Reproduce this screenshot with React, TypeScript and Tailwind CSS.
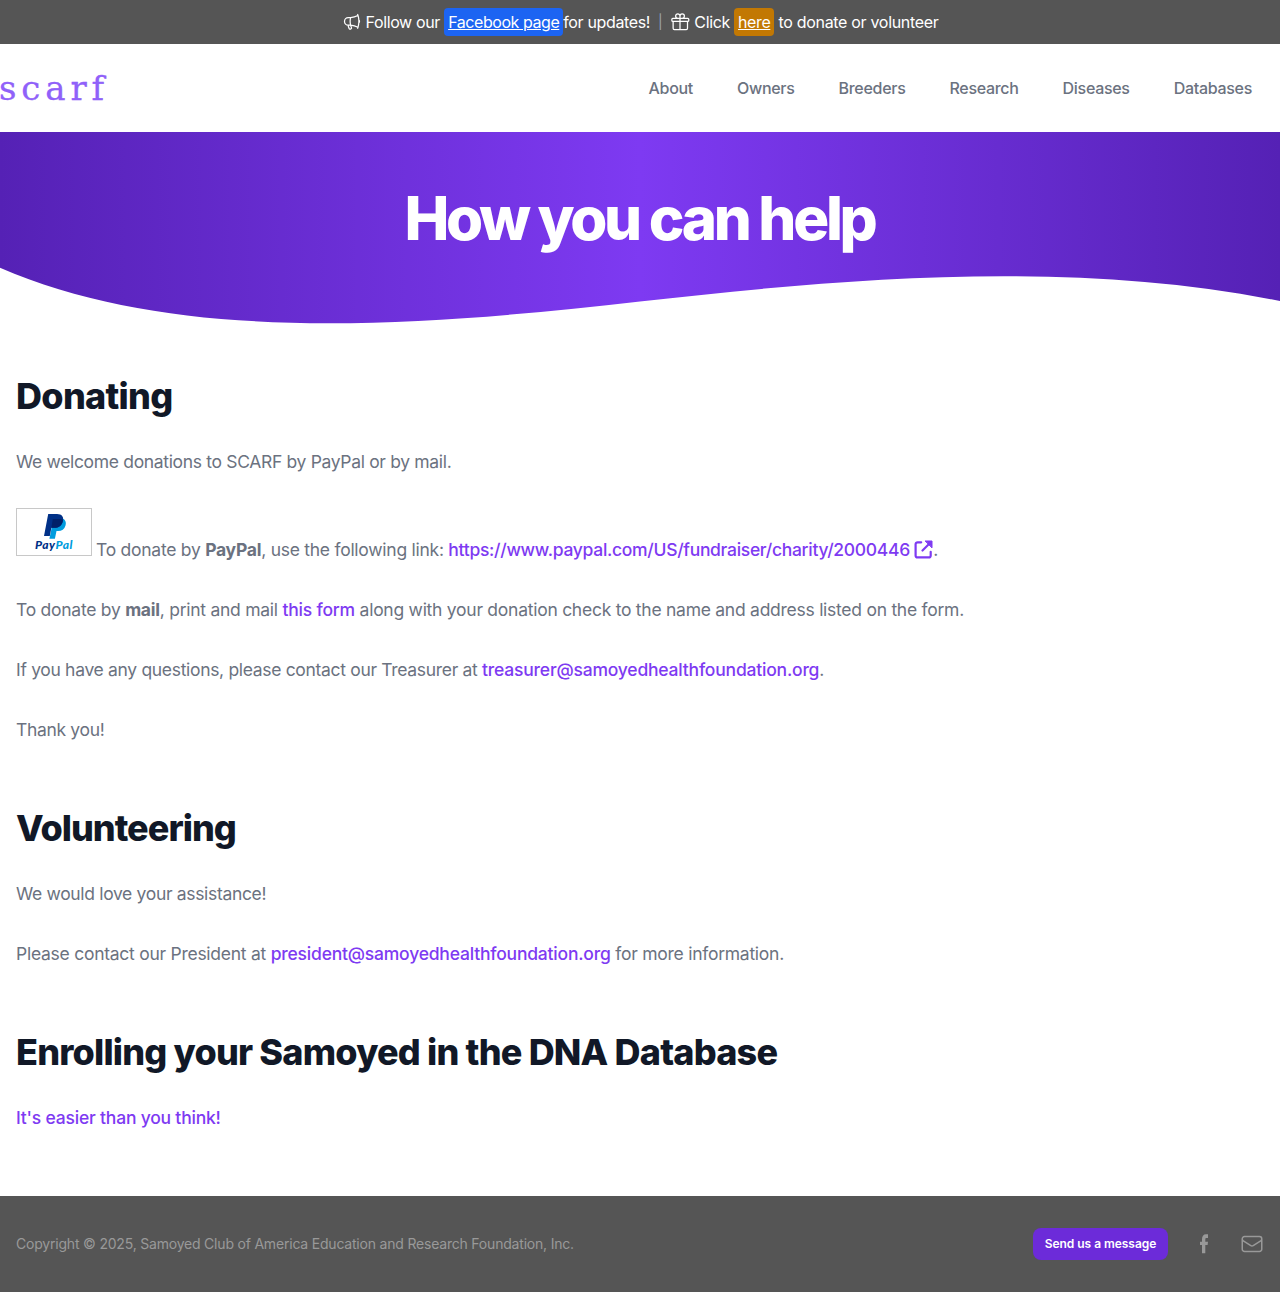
import React from "react";
import { HiOutlineMegaphone, HiOutlineGift, HiOutlineEnvelope } from "react-icons/hi2";

const navItems = ["About", "Owners", "Breeders", "Research", "Diseases", "Databases"];

function Banner() {
  return (
    <div className="flex h-11 items-center justify-center bg-[#555555] pl-px text-base tracking-[-0.36px] whitespace-pre text-white">
      <HiOutlineMegaphone className="mr-[3px] size-5" />
      <span>Follow our </span>
      <a className="flex h-7 items-center rounded bg-[#1c64f2] px-1 tracking-[-0.44px] underline">Facebook page</a>
      <span>for updates!</span>
      <span className="mx-2 text-sm text-[#9ca3af]">|</span>
      <HiOutlineGift className="mr-1 size-5" />
      <span>Click </span>
      <a className="flex h-7 items-center rounded bg-[#c27803] px-1 tracking-[-0.4px] underline">here</a>
      <span className="tracking-[-0.31px]"> to donate or volunteer</span>
    </div>
  );
}

function Header() {
  return (
    <header className="flex h-[88px] items-center justify-between bg-white pr-7">
      <span className="-ml-px font-['DejaVu_Serif'] text-[34px] leading-none tracking-[4.9px] text-[#9061f9] [-webkit-text-stroke:0.3px_#9061f9]">scarf</span>
      <nav className="flex gap-11 text-base font-medium tracking-[-0.3px] text-[#6b7280]">
        {navItems.map((item) => (
          <a key={item}>{item}</a>
        ))}
      </nav>
    </header>
  );
}

function Hero() {
  return (
    <section className="relative h-[200px] bg-linear-to-r/srgb from-[#5521b5] via-[#7e3af2] to-[#5521b5] pt-14">
      <h1 className="pr-px text-center text-[60px] leading-[60px] font-extrabold tracking-[-3.3px] text-white">How you can help</h1>
      <svg className="absolute bottom-0 left-0 w-full" height="72" viewBox="0 260 1280 72" preserveAspectRatio="none">
        <path fill="#fff" d="M0 267.7C172 342.2 400 329 640 301.500C840 279 1067 258.500 1280 301V333H0Z" />
      </svg>
    </section>
  );
}

function PayPalBadge() {
  return (
    <span className="mr-1 inline-block h-12 w-[76px] overflow-hidden border border-[#c8c8c8] bg-white pt-[5px] text-center">
      <svg className="ml-[27px] block" width="22" height="25" viewBox="0 0 22 25">
        <path fill="#009cde" d="M9.5 5H19.500c2.400 1.500 2.700 4 2 6.500-1 3.700-3.800 5.500-7.300 5.500h-1.700L10.900 24.700H5.400Z" />
        <path fill="#003087" d="M4.200 0H13c4.800 0 6.900 2.800 6 6.900-1 4.700-4.200 6.900-8.800 6.900H7.400L5.800 22H0Z" />
        <path fill="#012169" d="M8.800 5h7c1.200 0 2.200.3 3.100.9-.8 5.500-4 7.900-8.700 7.900H7.400Z" />
      </svg>
      <span className="block font-['Lato'] text-[12px] leading-[12px] font-black tracking-[0.5px] text-[#003087] italic">
        Pay<span className="text-[#009cde]">Pal</span>
      </span>
    </span>
  );
}

function ExternalIcon() {
  return (
    <svg className="inline-block align-[-3px]" width="19" height="19" viewBox="0 0 19 19" fill="none" stroke="currentColor" strokeWidth="2.2" strokeLinecap="round" strokeLinejoin="round">
      <path d="M7.200 2.300H3.600a2 2 0 0 0-2 2V15.400a2 2 0 0 0 2 2H14.700a2 2 0 0 0 2-2V11.800" />
      <path d="M8.500 10.500L15.500 3.500" />
      <path fill="currentColor" strokeWidth="1" d="M11.500 1H18V7.500Z" />
    </svg>
  );
}

function Link({ children }: { children: React.ReactNode }) {
  return <a className="font-medium tracking-[-0.2px] text-[#7e3af2]">{children}</a>;
}

function Main() {
  return (
    <main className="flex h-[864px] flex-col px-4 pt-11 text-[17.5px] leading-8 tracking-[-0.26px] text-[#6b7280]">
      <h2 className="text-[36px] leading-10 font-extrabold tracking-[-0.7px] text-[#111827]">Donating</h2>
      <p className="mt-[30px] tracking-[-0.33px]">We welcome donations to SCARF by PayPal or by mail.</p>
      <p className="mt-[30px] h-[58px]">
        <PayPalBadge />
        To donate by <strong>PayPal</strong>, use the following link:{" "}
        <a className="font-medium tracking-[-0.3px] text-[#7e3af2]">
          https://www.paypal.com/US/fundraiser/charity/2000446 <ExternalIcon />
        </a>
        .
      </p>
      <p className="mt-7">
        To donate by <strong>mail</strong>, print and mail <Link>this form</Link> along with your donation check to the name and address listed on the form.
      </p>
      <p className="mt-7 tracking-[-0.32px]">
        If you have any questions, please contact our Treasurer at <Link>treasurer@samoyedhealthfoundation.org</Link>.
      </p>
      <p className="mt-7 tracking-[-0.33px]">Thank you!</p>
      <h2 className="mt-[62px] text-[36px] leading-10 font-extrabold tracking-[-0.98px] text-[#111827]">Volunteering</h2>
      <p className="mt-[30px] tracking-[-0.33px]">We would love your assistance!</p>
      <p className="mt-7">
        Please contact our President at <Link>president@samoyedhealthfoundation.org</Link> for more information.
      </p>
      <h2 className="mt-[62px] text-[36px] leading-10 font-extrabold tracking-[-0.8px] text-[#111827]">
        Enrolling your Samoyed in the DNA Database
      </h2>
      <p className="mt-[30px]">
        <Link>It's easier than you think!</Link>
      </p>
    </main>
  );
}

function Footer() {
  return (
    <footer className="flex h-24 items-center justify-between bg-[#555555] px-4 text-[#999999]">
      <p className="text-sm tracking-[-0.2px]">
        Copyright © 2025, Samoyed Club of America Education and Research Foundation, Inc.
      </p>
      <div className="flex items-center">
        <a className="flex h-8 w-[135px] items-center justify-center rounded-lg bg-[#6c2bd9] text-xs font-semibold tracking-[-0.04px] text-white">Send us a message</a>
        <svg className="ml-6 size-6" viewBox="0 0 24 24" fill="currentColor">
          <path d="M10 21.300V13H8V9.700h2V7.200C10 4.300 11.300 2.200 14 2.200h2V6h-1.300C13.700 6 13.300 6.500 13.300 7.400V9.700H16L15.600 13H13.300V21.300Z" />
        </svg>
        <HiOutlineEnvelope className="ml-6 size-6" />
      </div>
    </footer>
  );
}

export default function App() {
  return (
    <div className="w-full bg-white font-['Inter',sans-serif]">
      <Banner />
      <Header />
      <Hero />
      <Main />
      <Footer />
    </div>
  );
}
